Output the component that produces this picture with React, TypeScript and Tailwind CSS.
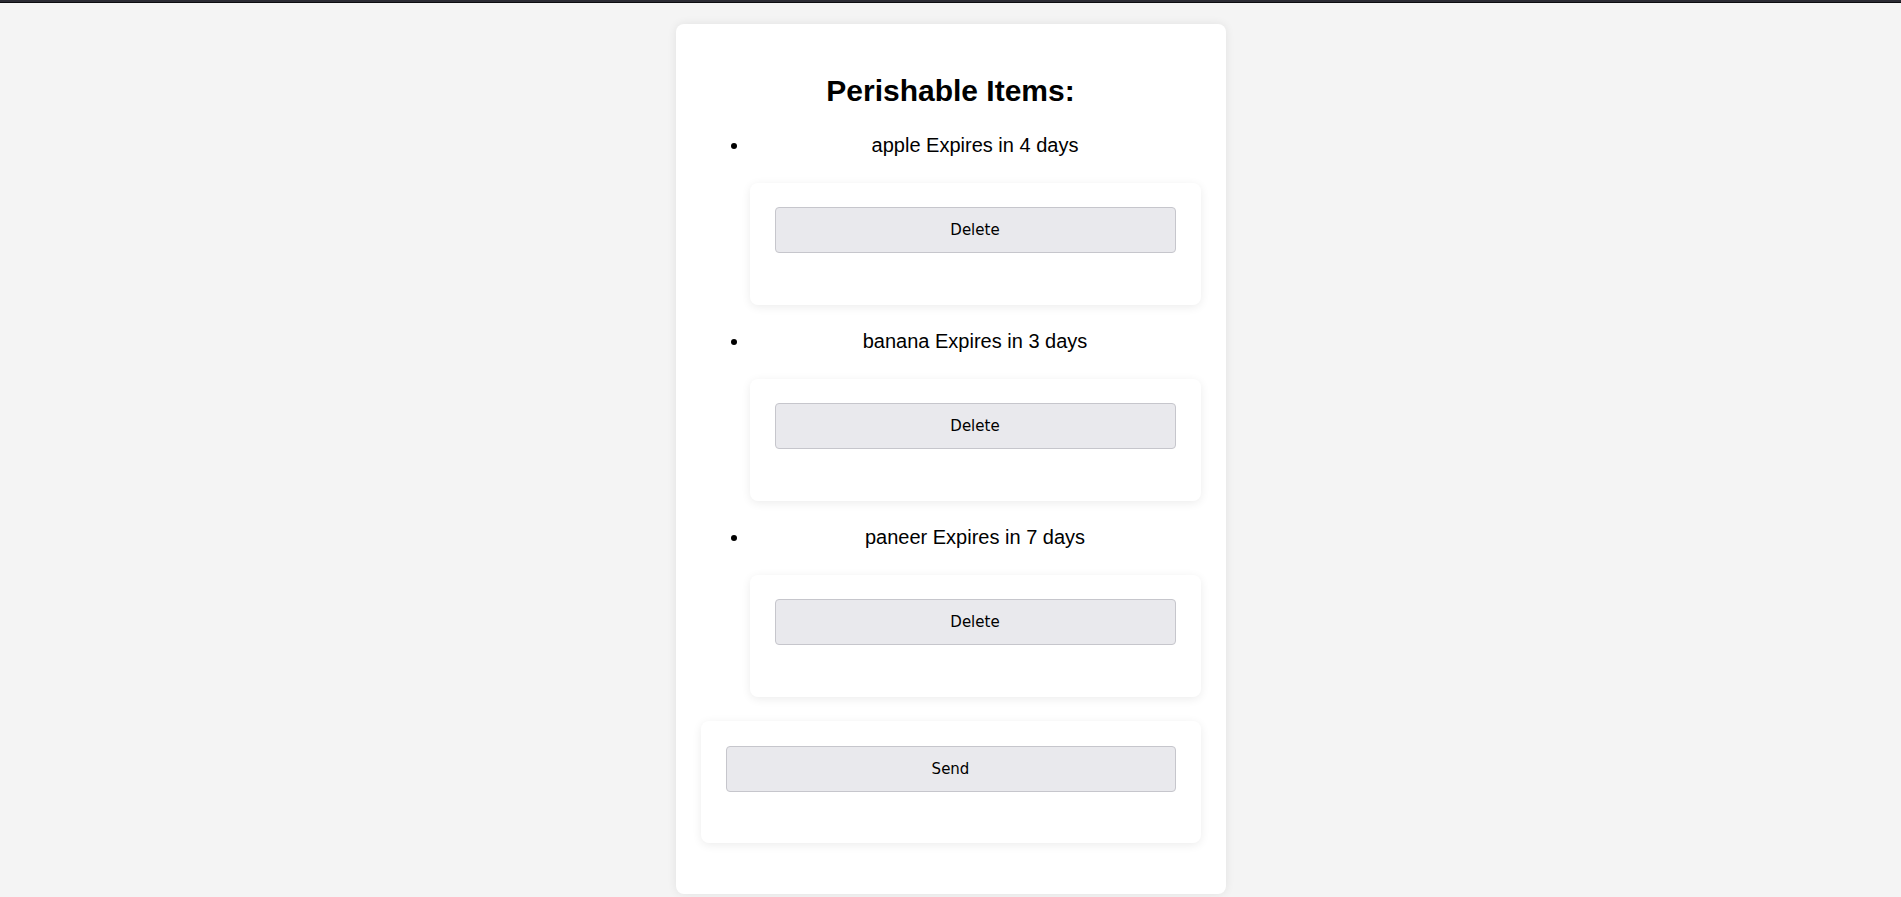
const items = [
  { name: "apple", days: 4 },
  { name: "banana", days: 3 },
  { name: "paneer", days: 7 },
];

function ActionButton({ label }: { label: string }) {
  return (
    <button
      type="button"
      className="h-[46px] w-full rounded-[4px] border border-[#c6c6cc] bg-[#e9e9ed] text-[15px] text-black [font-family:'DejaVu_Sans',Tahoma,sans-serif]"
    >
      {label}
    </button>
  );
}

export default function App() {
  return (
    <div className="min-h-screen bg-[#f4f4f4] [font-family:'Liberation_Sans',Arial,sans-serif] text-black">
      <div className="h-[2px] bg-[#2b2b33]" />
      <div className="h-[1px] bg-[#0d0d10]" />

      <div className="mx-auto mt-[21px] w-[550px] rounded-lg bg-white px-[25px] pt-[25px] pb-[26px] shadow-[0_0_10px_rgba(0,0,0,0.08)]">
        <h2 className="mt-[25px] mb-[25px] text-center text-[30px] font-bold leading-[34px]">
          Perishable Items:
        </h2>

        <ul className="list-disc pl-[49px]">
          {items.map((item) => (
            <li key={item.name} className="text-[20px] leading-[24px]">
              <div className="text-center">
                {item.name} Expires in {item.days} days
              </div>
              <div className="mt-[26px] mb-[24px] rounded-lg bg-white px-[25px] pt-[24px] pb-[52px] shadow-[0_2px_10px_rgba(0,0,0,0.08)]">
                <ActionButton label="Delete" />
              </div>
            </li>
          ))}
        </ul>

        <div className="mb-[25px] rounded-lg bg-white px-[25px] pt-[25px] pb-[51px] shadow-[0_2px_10px_rgba(0,0,0,0.08)]">
          <ActionButton label="Send" />
        </div>
      </div>
    </div>
  );
}
